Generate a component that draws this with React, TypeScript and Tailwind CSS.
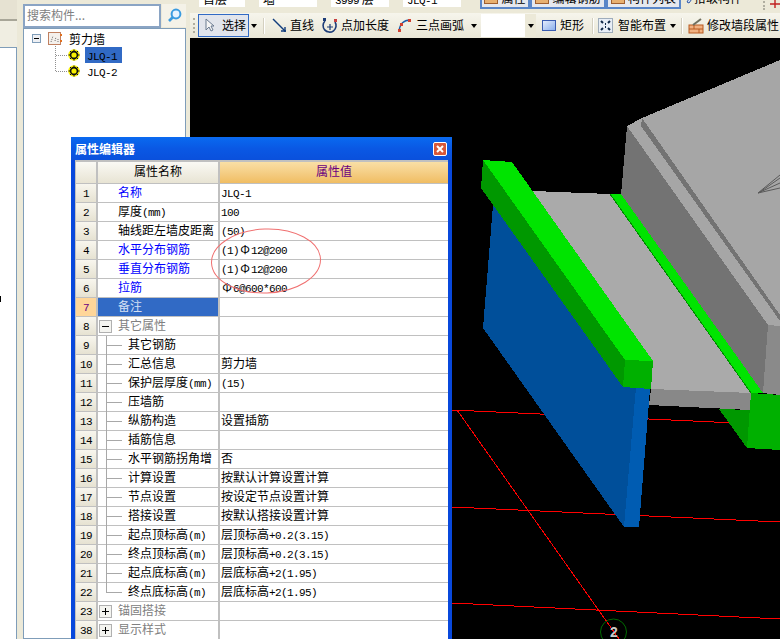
import React from "react";

type Row = {
  no: number;
  name: string;
  value?: string;
  kind?: "link" | "plain" | "selected" | "group" | "child" | "last";
  open?: boolean;
};

const ROWS: Row[] = [
  { no: 1, name: "名称", value: "JLQ-1", kind: "link" },
  { no: 2, name: "厚度(mm)", value: "100" },
  { no: 3, name: "轴线距左墙皮距离", value: "(50)" },
  { no: 4, name: "水平分布钢筋", value: "(1)Φ12@200", kind: "link" },
  { no: 5, name: "垂直分布钢筋", value: "(1)Φ12@200", kind: "link" },
  { no: 6, name: "拉筋", value: "Φ6@600*600", kind: "link" },
  { no: 7, name: "备注", kind: "selected" },
  { no: 8, name: "其它属性", kind: "group", open: true },
  { no: 9, name: "其它钢筋", kind: "child" },
  { no: 10, name: "汇总信息", value: "剪力墙", kind: "child" },
  { no: 11, name: "保护层厚度(mm)", value: "(15)", kind: "child" },
  { no: 12, name: "压墙筋", kind: "child" },
  { no: 13, name: "纵筋构造", value: "设置插筋", kind: "child" },
  { no: 14, name: "插筋信息", kind: "child" },
  { no: 15, name: "水平钢筋拐角增", value: "否", kind: "child" },
  { no: 16, name: "计算设置", value: "按默认计算设置计算", kind: "child" },
  { no: 17, name: "节点设置", value: "按设定节点设置计算", kind: "child" },
  { no: 18, name: "搭接设置", value: "按默认搭接设置计算", kind: "child" },
  { no: 19, name: "起点顶标高(m)", value: "层顶标高+0.2(3.15)", kind: "child" },
  { no: 20, name: "终点顶标高(m)", value: "层顶标高+0.2(3.15)", kind: "child" },
  { no: 21, name: "起点底标高(m)", value: "层底标高+2(1.95)", kind: "child" },
  { no: 22, name: "终点底标高(m)", value: "层底标高+2(1.95)", kind: "last" },
  { no: 23, name: "锚固搭接", kind: "group" },
  { no: 38, name: "显示样式", kind: "group" },
];

const FONT = "font-['Noto_Sans_CJK_SC',sans-serif]";

// latin characters are half width in the original bitmap font
function Txt({ text }: { text: string }) {
  const parts = text.split(/([\x21-\x7e]+|Φ)/).filter(Boolean);
  return (
    <>
      {parts.map((part, i) =>
        part === "Φ" ? (
          <span key={i} className="inline-block w-[12px] text-center">Φ</span>
        ) : /^[\x21-\x7e]+$/.test(part) ? (
          <span key={i} className="font-['Liberation_Mono',monospace] text-[11px] tracking-[-0.6px]">{part}</span>
        ) : (
          <span key={i}>{part}</span>
        )
      )}
    </>
  );
}

function Caret() {
  return <span className="w-0 h-0 shrink-0 border-x-[3px] border-x-transparent border-t-[4px] border-t-black" />;
}

function Sep() {
  return <span className="block w-[2px] h-[16px] bg-[#d4d0c0] border-r border-white" />;
}

function Combo({ text, width }: { text: string; width: string }) {
  return (
    <div className={`${width} h-[20px] mb-[6px] flex bg-white shrink-0`}>
      <span className="flex-1 pl-[4px] pt-[4px] text-[12px] leading-[16px] text-black whitespace-nowrap"><Txt text={text} /></span>
      <span className="w-[12px] bg-[#ece9d8]" />
    </div>
  );
}

function TopButton({ text, width }: { text: string; width: string }) {
  return (
    <div className={`${width} h-[22px] mb-[4px] border-2 border-[#5a86c8] bg-[#e6e8ee] shrink-0 flex items-center justify-center gap-[3px] text-[12px] whitespace-nowrap`}>
      <span className="w-[14px] h-[12px] bg-[#e8b070] border border-[#a06030]" />
      {text}
    </div>
  );
}

function PropertyRow({ row }: { row: Row }) {
  const kind = row.kind ?? "plain";
  const selected = kind === "selected";
  const isChild = kind === "child" || kind === "last";
  const nameColor =
    kind === "link" ? "text-[#0000ff]" : kind === "group" ? "text-[#808080]" : selected ? "text-[#d4e0f4]" : "text-black";
  return (
    <div className="grid grid-cols-[22px_120px_230px] h-[19px] leading-[15px] text-[12px] text-black">
      <div
        className={`text-center border-b border-[#c0c0c0] border-r-2 ${
          selected ? "bg-[#ffd699] text-[#6a0080]" : "bg-gradient-to-b from-[#f8f6ee] to-[#e6e2d2]"
        }`}
      >
        <Txt text={String(row.no)} />
      </div>
      <div className={`relative border-b border-[#c0c0c0] whitespace-nowrap ${selected ? "bg-[#316ac5]" : "bg-white"} ${nameColor} ${isChild ? "pl-[30px]" : "pl-[20px]"}`}>
        {kind === "group" && (
          <span className="absolute left-[1px] top-[3px] w-[13px] h-[13px] border border-[#b0b0b0] bg-[#f4f4f0] flex items-center justify-center">
            <span className="relative w-[7px] h-[1px] bg-black">
              {!row.open && <span className="absolute left-[3px] -top-[3px] w-[1px] h-[7px] bg-black" />}
            </span>
          </span>
        )}
        {isChild && (
          <>
            <span className={`absolute left-[8px] top-0 w-[1px] bg-[#a8a8a8] ${kind === "last" ? "h-[9px]" : "h-[19px]"}`} />
            <span className="absolute left-[8px] top-[9px] w-[16px] h-[1px] bg-[#a8a8a8]" />
          </>
        )}
        <Txt text={row.name} />
      </div>
      <div className="border-b border-l-2 border-[#c0c0c0] bg-white pl-[1px] whitespace-nowrap overflow-hidden">
        {row.value && <Txt text={row.value} />}
      </div>
    </div>
  );
}

function PropertyEditor() {
  return (
    <div className={`absolute left-[71px] top-[137px] w-[381px] h-[502px] bg-[#0848dc] rounded-t-[2px] px-[4px] ${FONT}`}>
      <div className="h-[23px] -mx-[4px] px-[4px] bg-gradient-to-b from-[#0a6af0] via-[#0a58e4] to-[#0a50dc] flex items-center justify-between">
        <span className="text-white font-bold text-[12px]">属性编辑器</span>
        <span className="w-[14px] h-[14px] mr-[1px] border border-white rounded-[2px] bg-[#d8583a] text-white flex items-center justify-center">
          <svg width="8" height="8" viewBox="0 0 8 8">
            <path d="M1 1 L7 7 M7 1 L1 7" stroke="#fff" strokeWidth="2" />
          </svg>
        </span>
      </div>
      <div className="border-t-2 border-l border-r-2 border-[#c0c0c0] bg-white">
        <div className="grid grid-cols-[22px_120px_230px] h-[22px] leading-[18px] text-[12px]">
          <div className="border-r-2 border-b border-[#c0c0c0] bg-gradient-to-b from-[#faf9f4] to-[#e8e4d4]" />
          <div className="text-center border-b border-[#c0c0c0] bg-gradient-to-b from-[#faf9f4] to-[#e8e4d4] text-black">属性名称</div>
          <div className="text-center border-l-2 border-b border-[#c0c0c0] bg-gradient-to-b from-[#f9dfa6] to-[#f0bd62] text-[#6a0080]">属性值</div>
        </div>
        {ROWS.map((row) => (
          <PropertyRow key={row.no} row={row} />
        ))}
      </div>
      <svg className="absolute left-[139px] top-[90px] pointer-events-none" width="114" height="68" viewBox="0 0 114 68">
        <ellipse cx="56" cy="34" rx="54.5" ry="32" fill="none" stroke="#f07070" strokeWidth="1" transform="rotate(-2 56 34)" />
      </svg>
    </div>
  );
}

function Viewport() {
  return (
    <svg className="flex-1 w-full min-h-0 bg-black" viewBox="190 38 590 601" preserveAspectRatio="none" shapeRendering="crispEdges">
      <g stroke="#ff0000" strokeWidth="1" fill="none">
        <path d="M452 410 L780 425" />
        <path d="M452 507 L780 522" />
        <path d="M452 603 L780 619" />
        <path d="M457 410 L619 639" />
      </g>
      <polygon points="642,118 780,60 780,326 768,325 627,126" fill="#a6a6a6" />
      <polygon points="642,118 780,315 780,321 641,126" fill="#737373" />
      <polygon points="627,126 768,325 763,393 621,195" fill="#737373" />
      <polygon points="768,325 780,326 780,395 763,393" fill="#8a8a8a" />
      <g stroke="#5a5a5a" strokeWidth="1" fill="none" shapeRendering="auto">
        <path d="M758 193 L780 175 M758 193 L780 183 M758 193 L780 188 M760 192 L780 178" />
      </g>
      <polygon points="533,191 610,194 752,393 651,389" fill="#aaaaaa" />
      <polygon points="651,389 752,393 750,410 649,405" fill="#888888" />
      <polygon points="610,194 621,194 763,393 751,393" fill="#00e400" />
      <path d="M610 194 L751 393" stroke="#008c00" strokeWidth="1" />
      <polygon points="719,409 750,410 747,448" fill="#009800" />
      <polygon points="751,393 780,395 780,450 747,448" fill="#00b000" />
      <polygon points="493,205 483,328 624,527 636,387" fill="#004f9a" />
      <polygon points="636,387 650,389 639,527 624,527" fill="#005cb2" />
      <polygon points="483,160 481,188 623,387 625,360" fill="#009800" />
      <polygon points="483,160 512,162 653,361 625,360" fill="#00e400" />
      <polygon points="625,360 653,361 651,389 623,387" fill="#00b000" />
      <circle cx="613.5" cy="632" r="13" fill="none" stroke="#006a00" strokeWidth="1" shapeRendering="auto" />
      <text x="614" y="637" textAnchor="middle" fontSize="14" fontWeight="bold" fill="#c8c8c8" fontFamily="Liberation Sans, sans-serif" shapeRendering="auto">
        2
      </text>
    </svg>
  );
}

function DrawToolbar() {
  return (
    <div className="h-[25px] flex items-center text-[12px] leading-[15px] text-black bg-gradient-to-b from-[#f6f5ec] to-[#e9e6d6] shrink-0 pl-[3px] whitespace-nowrap overflow-hidden">
      <span className="w-[3px] h-[15px] border-l-2 border-dotted border-[#b0aea0] shrink-0" />
      <div className="ml-[2px] w-[51px] h-[23px] border border-[#316ac5] bg-[#e2e5ec] flex items-center pl-[6px] pb-[2px] gap-[7px] shrink-0">
        <svg width="10" height="14" viewBox="0 0 10 14">
          <path d="M1 1 L1 12 L4 9 L6 13 L8 12 L6 8 L9 8 Z" fill="#f4f4f4" stroke="#6a7a90" strokeWidth="1" />
        </svg>
        选择
      </div>
      <span className="ml-[2px] flex"><Caret /></span>
      <span className="ml-[6px]"><Sep /></span>
      <svg className="ml-[7px] shrink-0" width="15" height="15" viewBox="0 0 15 15">
        <path d="M1 1 L13 13" stroke="#103c7c" strokeWidth="1.4" />
        <path d="M13 14 L13 9 M14 13 L9 13" stroke="#103c7c" strokeWidth="1.4" />
      </svg>
      <span className="ml-[3px] mb-[2px] shrink-0">直线</span>
      <svg className="ml-[8px] shrink-0" width="16" height="17" viewBox="0 0 16 17">
        <path d="M3 4 A6.5 6.5 0 1 0 13 5" fill="none" stroke="#1c3c78" strokeWidth="1.6" />
        <path d="M8 7 L8 13 M5 10 L11 10" stroke="#1c3c78" strokeWidth="1.2" />
        <rect x="1" y="1" width="3" height="3" fill="#1c3c78" />
        <rect x="12" y="2" width="3" height="3" fill="#c84040" />
      </svg>
      <span className="ml-[3px] mb-[2px] shrink-0">点加长度</span>
      <svg className="ml-[8px] shrink-0" width="15" height="15" viewBox="0 0 15 15">
        <path d="M2 13 C3 6 7 2 13 2" fill="none" stroke="#1c5ca8" strokeWidth="1.4" />
        <rect x="1" y="11" width="3" height="3" fill="#d04030" />
        <rect x="3" y="5" width="3" height="3" fill="#d04030" />
        <rect x="11" y="1" width="3" height="3" fill="#d04030" />
      </svg>
      <span className="ml-[4px] mb-[2px] shrink-0">三点画弧</span>
      <span className="ml-[7px] flex"><Caret /></span>
      <div className="ml-[4px] w-[55px] h-[23px] flex shrink-0">
        <span className="flex-1 bg-white" />
        <span className="w-[11px] bg-[#ece9d8] flex items-center justify-center"><Caret /></span>
      </div>
      <span className="ml-[6px] w-[14px] h-[11px] border border-[#3a5cb0] bg-gradient-to-br from-[#e4ecfc] to-[#8cb0ec] shrink-0" />
      <span className="ml-[4px] mb-[2px] shrink-0">矩形</span>
      <span className="ml-[8px]"><Sep /></span>
      <svg className="ml-[4px] shrink-0" width="15" height="15" viewBox="0 0 15 15">
        <rect x="0.5" y="0.5" width="14" height="14" fill="#e8eef6" stroke="#506a8a" strokeDasharray="1 1" />
        <path d="M3 3 L5 5 M12 3 L10 5 M3 12 L5 10 M12 12 L10 10 M7 6 L8 6 M7 9 L8 9" stroke="#102848" strokeWidth="2" />
      </svg>
      <span className="ml-[5px] mb-[2px] shrink-0">智能布置</span>
      <span className="ml-[4px] flex"><Caret /></span>
      <span className="ml-[5px]"><Sep /></span>
      <svg className="ml-[5px] shrink-0" width="16" height="16" viewBox="0 0 16 16">
        <rect x="1" y="7" width="14" height="8" fill="#f0b080" stroke="#b85a20" />
        <path d="M1 11 L15 11 M6 7 L6 11 M11 11 L11 15" stroke="#b85a20" />
        <path d="M5 7 L13 1" stroke="#707060" strokeWidth="2" />
      </svg>
      <span className="ml-[3px] mb-[2px] shrink-0">修改墙段属性</span>
    </div>
  );
}

function TopStrip() {
  return (
    <div className="h-[13px] overflow-hidden shrink-0 bg-[#ece9d8]">
      <div className="-mt-[19px] flex items-end h-[32px] pl-[9px] text-black">
        <Combo text="首层" width="w-[58px]" />
        <span className="w-[2px] shrink-0" />
        <Combo text="墙" width="w-[70px]" />
        <span className="w-[2px] shrink-0" />
        <Combo text="3999 层" width="w-[70px]" />
        <span className="w-[2px] shrink-0" />
        <Combo text="JLQ-1" width="w-[70px]" />
        <span className="w-[7px] shrink-0" />
        <TopButton text="属性" width="w-[50px]" />
        <TopButton text="编辑钢筋" width="w-[76px]" />
        <TopButton text="构件列表" width="w-[75px]" />
        <span className="ml-[5px] mb-[6px] text-[12px] whitespace-nowrap shrink-0 flex items-center">
          <svg width="8" height="12" viewBox="0 0 8 12">
            <path d="M1 10 L6 2 L8 4 L3 11 Z" fill="#dfe8f8" stroke="#2a56a8" />
          </svg>
          拾取构件
        </span>
        <span className="ml-[21px] mb-[3px] w-[3px] h-[12px] border-l-2 border-dotted border-[#b0aea0] shrink-0" />
        <svg className="ml-[4px] mb-[5px] shrink-0" width="10" height="10" viewBox="0 0 10 10">
          <path d="M5 0 L5 10 M0 6 L10 6" stroke="#c02020" strokeWidth="1.4" />
        </svg>
      </div>
    </div>
  );
}

function TreePanel() {
  return (
    <div className="w-[173px] shrink-0 pl-[6px] pr-[4px] flex flex-col">
      <div className="h-[28px] pt-[4px] flex shrink-0">
        <div className="w-[138px] h-[24px] border-2 border-[#8aa4c4] bg-white pl-[2px] text-[12px] leading-[18px] text-[#808080]">搜索构件...</div>
        <div className="ml-[1px] w-[24px] h-[23px] bg-[#f4f2e8] flex items-center justify-center">
          <svg width="15" height="15" viewBox="0 0 15 15">
            <circle cx="9" cy="6" r="4.4" fill="#e6f3ff" stroke="#3a9be0" strokeWidth="2" />
            <path d="M6 9 L2 13" stroke="#3a9be0" strokeWidth="2.6" />
          </svg>
        </div>
      </div>
      <div className="flex-1 border border-[#7f9db9] bg-white text-[12px] text-black relative pl-[8px] pt-[1px]">
        <div className="h-[17px] flex items-center">
          <span className="w-[9px] h-[9px] border border-[#7f9db9] bg-[#eef0f4] flex items-center justify-center">
            <span className="w-[5px] h-[1px] bg-black" />
          </span>
          <svg className="ml-[7px]" width="14" height="13" viewBox="0 0 14 13">
            <rect x="0.5" y="0.5" width="12" height="12" fill="#f4f0ec" stroke="#c08060" />
            <path d="M3 10 L5 4 M7 9 L8 5 M10 10 L10 7" stroke="#707070" strokeDasharray="1 1" />
            <rect x="12" y="2" width="2" height="2" fill="#e07020" />
            <rect x="12" y="8" width="2" height="2" fill="#e07020" />
          </svg>
          <span className="ml-[7px]">剪力墙</span>
        </div>
        <span className="absolute left-[31px] top-[17px] h-[25px] w-[1px] border-l border-dotted border-[#909090]" />
        {["JLQ-1", "JLQ-2"].map((name, i) => (
          <div key={name} className="h-[16px] flex items-center relative pl-[24px]">
            <span className="w-[11px] border-t border-dotted border-[#909090]" />
            <svg className="ml-[1px]" width="12" height="12" viewBox="0 0 12 12">
              <circle cx="6" cy="6" r="5.8" fill="#f8f000" />
              <circle cx="6" cy="6" r="3.4" fill="#f8f000" stroke="#101010" strokeWidth="1.6" />
              <path d="M6 0.5 L6 3 M6 9 L6 11.5 M0.5 6 L3 6 M9 6 L11.5 6 M2 2 L3.5 3.5 M10 2 L8.5 3.5 M2 10 L3.5 8.5 M10 10 L8.5 8.5" stroke="#101010" strokeWidth="1" />
            </svg>
            <span className={`ml-[5px] pl-[2px] w-[37px] h-[16px] leading-[16px] ${i === 0 ? "bg-[#316ac5]" : ""}`}><Txt text={name} /></span>
          </div>
        ))}
      </div>
    </div>
  );
}

export default function App() {
  return (
    <div className={`relative w-[780px] h-[639px] overflow-hidden flex bg-[#ece9d8] ${FONT}`}>
      <div className="w-[17px] shrink-0 flex flex-col">
        <div className="h-[21px] bg-[#e6e2d2] border-b-2 border-[#a8a698] shrink-0" />
        <div className="h-[26px] bg-[#f0eee2] shrink-0" />
        <div className="flex-1 bg-white border-t border-r border-[#7f9db9]" />
      </div>
      <TreePanel />
      <div className="flex-1 min-w-0 flex flex-col">
        <TopStrip />
        <DrawToolbar />
        <Viewport />
      </div>
      <PropertyEditor />
      <span className="absolute left-0 top-[296px] w-[1px] h-[6px] bg-black" />
    </div>
  );
}
